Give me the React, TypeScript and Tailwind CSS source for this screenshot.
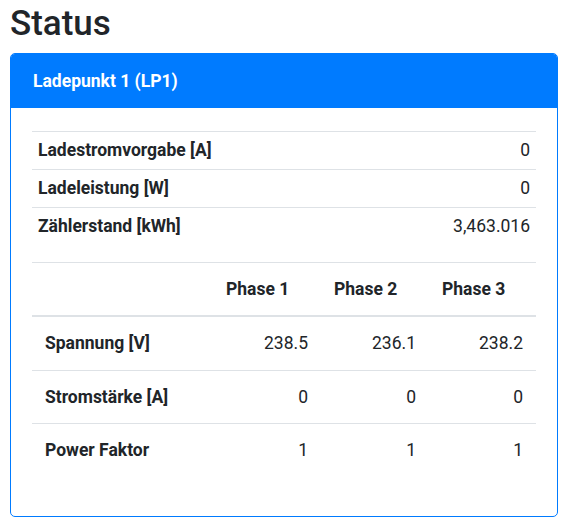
const SUMMARY = [
  { label: "Ladestromvorgabe [A]", value: "0" },
  { label: "Ladeleistung [W]", value: "0" },
  { label: "Zählerstand [kWh]", value: "3,463.016" },
];

const PHASES = [
  { label: "Spannung [V]", values: ["238.5", "236.1", "238.2"] },
  { label: "Stromstärke [A]", values: ["0", "0", "0"] },
  { label: "Power Faktor", values: ["1", "1", "1"] },
];

const GRID = "grid grid-cols-[181px_108px_108px_107px]";

export default function App() {
  return (
    <div className="min-h-screen bg-white px-[10px] pt-[3px] font-['Roboto',sans-serif] text-[#212529]">
      <h2 className="mb-[8px] text-[35px] font-medium leading-[42px]">Status</h2>

      {/* ── Card ─────────────────────────── */}
      <div className="w-[548px] overflow-hidden rounded-[5px] border border-[#007bff]">
        <div className="flex h-[54px] items-center bg-[#007bff] px-[22px] text-[17.5px] font-bold text-white">
          Ladepunkt 1 (LP1)
        </div>

        <div className="px-[21px] pt-[23px] pb-[40px]">
          {/* Summary */}
          <div className="mb-[17px] text-[17.5px]">
            {SUMMARY.map((row) => (
              <div
                key={row.label}
                className="flex h-[38px] items-center justify-between border-t border-[#dee2e6] px-[6px]"
              >
                <span className="font-bold">{row.label}</span>
                <span>{row.value}</span>
              </div>
            ))}
          </div>

          {/* Phases */}
          <div className="text-[17.5px]">
            <div className={`${GRID} h-[55px] items-center border-t border-b-2 border-[#dee2e6] font-bold`}>
              <div />
              <div className="px-[13px]">Phase 1</div>
              <div className="px-[13px]">Phase 2</div>
              <div className="px-[13px]">Phase 3</div>
            </div>
            {PHASES.map((row, i) => (
              <div
                key={row.label}
                className={`${GRID} h-[53px] items-center ${
                  i > 0 ? "border-t border-[#dee2e6]" : ""
                }`}
              >
                <div className="px-[13px] font-bold">{row.label}</div>
                {row.values.map((v, j) => (
                  <div key={j} className="px-[13px] text-right">
                    {v}
                  </div>
                ))}
              </div>
            ))}
          </div>
        </div>
      </div>
    </div>
  );
}
